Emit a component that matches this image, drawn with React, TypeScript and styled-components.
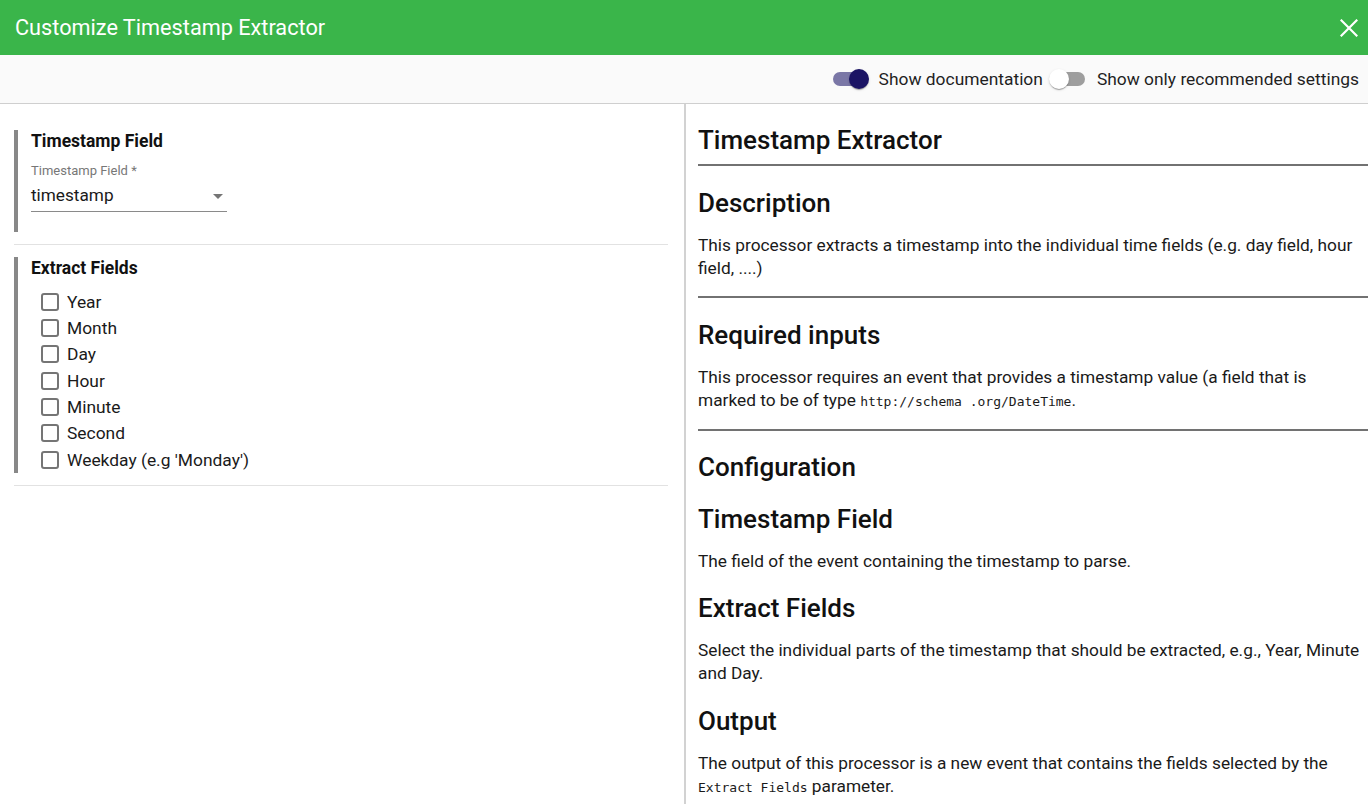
import React from "react";
import styled, { createGlobalStyle } from "styled-components";

const Global = createGlobalStyle`
  html, body { margin: 0; padding: 0; background: #ffffff; }
  body { font-family: Roboto, "Noto Sans", sans-serif; color: #1a1a1a; overflow: hidden; }
  * { box-sizing: border-box; }
`;

const Page = styled.div`
  width: 1368px;
  height: 804px;
  display: flex;
  flex-direction: column;
  overflow: hidden;
`;

const Header = styled.header`
  height: 55px;
  flex: none;
  background: #3ab54a;
  display: flex;
  align-items: center;
  justify-content: space-between;
  padding: 0 10px 0 15px;
  color: #ffffff;
`;

const Title = styled.h1`
  margin: 0;
  font-size: 21.7px;
  font-weight: 400;
`;

const CloseButton = styled.button`
  width: 18px;
  height: 18px;
  padding: 0;
  border: none;
  background: transparent;
  display: flex;
  align-items: center;
  justify-content: center;
  cursor: pointer;
`;

const Toolbar = styled.div`
  height: 49px;
  flex: none;
  background: #fafafa;
  border-bottom: 1px solid #cfcfcf;
  display: flex;
  align-items: center;
  justify-content: flex-end;
  padding: 0 3px 0 0;
`;

const ToggleWrap = styled.label`
  display: flex;
  align-items: center;
  font-size: 17.4px;
  color: #1f1f1f;
  margin-top: -1px;
`;

const SwitchBox = styled.span`
  position: relative;
  width: 38px;
  height: 20px;
  flex: none;
  margin-right: 10px;
`;

const Track = styled.span<{ $on: boolean }>`
  position: absolute;
  left: 2px;
  top: 3px;
  width: 34px;
  height: 14px;
  border-radius: 7px;
  background: ${(p) => (p.$on ? "#7a77a6" : "#9e9e9e")};
`;

const Thumb = styled.span<{ $on: boolean }>`
  position: absolute;
  top: 0;
  left: ${(p) => (p.$on ? "18px" : "0")};
  width: 20px;
  height: 20px;
  border-radius: 50%;
  background: ${(p) => (p.$on ? "#1b1464" : "#ffffff")};
  box-shadow: 0 2px 1px -1px rgba(0,0,0,0.2), 0 1px 1px 0 rgba(0,0,0,0.14), 0 1px 3px 0 rgba(0,0,0,0.12);
`;

const ToggleText = styled.span`
  margin-right: 6px;
`;

const Body = styled.div`
  flex: 1;
  display: flex;
  min-height: 0;
`;

const LeftPanel = styled.div`
  width: 686px;
  flex: none;
  padding: 26px 16px 0 14px;
  border-right: 2px solid #d2d2d2;
`;

const Section = styled.section<{ $bottom?: number }>`
  border-left: 4px solid #888888;
  padding: 1px 0 ${(p) => p.$bottom ?? 0}px 13px;
`;

const SectionTitle = styled.div`
  font-size: 17.5px;
  font-weight: 700;
  line-height: 20px;
  color: #111;
`;

const FieldLabel = styled.div`
  margin-top: 11.5px;
  font-size: 13px;
  line-height: 15px;
  color: #777777;
`;

const SelectBox = styled.div`
  width: 196px;
  height: 34px;
  border-bottom: 1px solid #8a8a8a;
  display: flex;
  align-items: flex-start;
  justify-content: space-between;
  font-size: 17.2px;
  line-height: 20px;
  color: #1a1a1a;
  padding: 7px 4px 0 0;
`;

const Arrow = styled.span`
  width: 0;
  height: 0;
  border-left: 5px solid transparent;
  border-right: 5px solid transparent;
  border-top: 5px solid #757575;
  margin-top: 9px;
`;

const Divider = styled.div`
  height: 1px;
  background: #e2e2e2;
  margin: 12px 0 12px;
`;

const CheckList = styled.div`
  margin-top: 11px;
  padding-left: 10px;
  display: flex;
  flex-direction: column;
`;

const CheckRow = styled.label`
  height: 26.33px;
  display: flex;
  align-items: center;
  font-size: 17.4px;
  color: #1a1a1a;
`;

const Box = styled.span`
  width: 18px;
  height: 18px;
  border: 2px solid #757575;
  border-radius: 3px;
  margin-right: 8px;
  flex: none;
`;

const RightPanel = styled.div`
  flex: 1;
  padding: 20.5px 0 0 12px;
  overflow: hidden;
`;

const DocH = styled.h2<{ $first?: boolean }>`
  margin: ${(p) => (p.$first ? "0 0 8.5px" : "20.5px 0 15px")};
  font-size: 26px;
  font-weight: 500;
  line-height: 31px;
  color: #111;
`;

const DocP = styled.p`
  margin: 15px 0 16.5px;
  font-size: 17.3px;
  line-height: 23px;
  color: #1a1a1a;
`;

const DocRule = styled.hr`
  margin: 8.5px 0 21.8px;
  border: none;
  height: 2px;
  background: #727272;
`;

const Code = styled.code`
  font-family: "DejaVu Sans Mono", "Liberation Mono", monospace;
  font-size: 13px;
  line-height: 0;
`;

const Toggle = ({ on, label }: { on: boolean; label: string }) => (
  <ToggleWrap>
    <SwitchBox>
      <Track $on={on} />
      <Thumb $on={on} />
    </SwitchBox>
    <ToggleText>{label}</ToggleText>
  </ToggleWrap>
);

const fields = ["Year", "Month", "Day", "Hour", "Minute", "Second", "Weekday (e.g 'Monday')"];

export default function App() {
  return (
    <Page>
      <Global />
      <Header>
        <Title>Customize Timestamp Extractor</Title>
        <CloseButton aria-label="close">
          <svg width="18" height="18" viewBox="0 0 18 18">
            <path d="M1.5 1.5 L16.5 16.5 M16.5 1.5 L1.5 16.5" stroke="#ffffff" strokeWidth="2.2" strokeLinecap="square" />
          </svg>
        </CloseButton>
      </Header>
      <Toolbar>
        <Toggle on={true} label="Show documentation" />
        <Toggle on={false} label="Show only recommended settings" />
      </Toolbar>
      <Body>
        <LeftPanel>
          <Section $bottom={20}>
            <SectionTitle>Timestamp Field</SectionTitle>
            <FieldLabel>Timestamp Field *</FieldLabel>
            <SelectBox>
              <span>timestamp</span>
              <Arrow />
            </SelectBox>
          </Section>
          <Divider />
          <Section>
            <SectionTitle>Extract Fields</SectionTitle>
            <CheckList>
              {fields.map((f) => (
                <CheckRow key={f}>
                  <Box />
                  {f}
                </CheckRow>
              ))}
            </CheckList>
          </Section>
          <Divider />
        </LeftPanel>
        <RightPanel>
          <DocH $first>Timestamp Extractor</DocH>
          <DocRule />
          <DocH>Description</DocH>
          <DocP>
            This processor extracts a timestamp into the individual time fields (e.g. day field, hour field, ....)
          </DocP>
          <DocRule />
          <DocH>Required inputs</DocH>
          <DocP>
            This processor requires an event that provides a timestamp value (a field that is marked to be of type{" "}
            <Code>http://schema .org/DateTime</Code>.
          </DocP>
          <DocRule />
          <DocH>Configuration</DocH>
          <DocH>Timestamp Field</DocH>
          <DocP>The field of the event containing the timestamp to parse.</DocP>
          <DocH>Extract Fields</DocH>
          <DocP>
            Select the individual parts of the timestamp that should be extracted, e.g., Year, Minute and Day.
          </DocP>
          <DocH>Output</DocH>
          <DocP>
            The output of this processor is a new event that contains the fields selected by the{" "}
            <Code>Extract Fields</Code> parameter.
          </DocP>
        </RightPanel>
      </Body>
    </Page>
  );
}
